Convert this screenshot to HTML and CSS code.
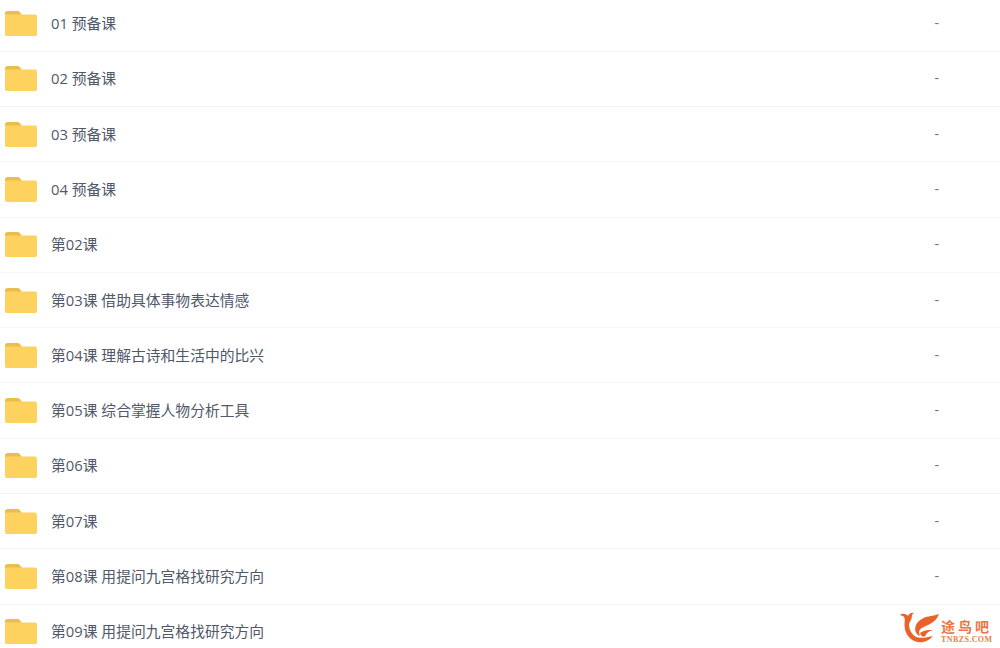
FILE: index.html
```html
<!DOCTYPE html>
<html lang="zh-CN">
<head>
<meta charset="UTF-8">
<title>文件列表</title>
<link rel="stylesheet" href="styles.css">
</head>
<body>
<svg class="defs" width="0" height="0">
  <symbol id="folder" viewBox="0 0 32 25">
    <path fill="#ecbd4e" d="M0 2.5C0 1 1 0 2.5 0h10c1 0 1.7.4 2.3 1.1L17 4H0z"/>
    <rect y="3.6" width="32" height="21.4" rx="1.8" fill="#fdd25f"/>
  </symbol>
</svg>
<ul class="file-list">
  <li class="row"><svg class="folder"><use href="#folder"/></svg><span class="name">01 预备课</span><span class="size">-</span></li>
  <li class="row"><svg class="folder"><use href="#folder"/></svg><span class="name">02 预备课</span><span class="size">-</span></li>
  <li class="row"><svg class="folder"><use href="#folder"/></svg><span class="name">03 预备课</span><span class="size">-</span></li>
  <li class="row"><svg class="folder"><use href="#folder"/></svg><span class="name">04 预备课</span><span class="size">-</span></li>
  <li class="row"><svg class="folder"><use href="#folder"/></svg><span class="name">第02课</span><span class="size">-</span></li>
  <li class="row"><svg class="folder"><use href="#folder"/></svg><span class="name">第03课 借助具体事物表达情感</span><span class="size">-</span></li>
  <li class="row"><svg class="folder"><use href="#folder"/></svg><span class="name">第04课 理解古诗和生活中的比兴</span><span class="size">-</span></li>
  <li class="row"><svg class="folder"><use href="#folder"/></svg><span class="name">第05课 综合掌握人物分析工具</span><span class="size">-</span></li>
  <li class="row"><svg class="folder"><use href="#folder"/></svg><span class="name">第06课</span><span class="size">-</span></li>
  <li class="row"><svg class="folder"><use href="#folder"/></svg><span class="name">第07课</span><span class="size">-</span></li>
  <li class="row"><svg class="folder"><use href="#folder"/></svg><span class="name">第08课 用提问九宫格找研究方向</span><span class="size">-</span></li>
  <li class="row"><svg class="folder"><use href="#folder"/></svg><span class="name">第09课 用提问九宫格找研究方向</span><span class="size">-</span></li>
</ul>
<div class="watermark">
  <svg class="wm-logo" viewBox="0 0 44 34">
    <path fill="#e8622a" d="M0 3C3 1 6 2 9 4 10 2 12 .5 15 1 14 2 13 3 13 5 13 9 10 11 10 14 10 20 14 27 20 28 25 29 30 28 36 26 33 31 26 34 20 33 12 32 5 24 5 15 5 10 6 7 4 5 3 4 1 4 0 3z"/>
    <path fill="#e8622a" d="M43 2C38 5 28 4 22 9 18 12 16 16 17 21 18 24 20 26 22 26 20 22 21 19 25 17 32 14 40 11 43 2z"/>
    <path fill="#e8622a" d="M22 23C26 20 31 19 36 20 32 21 29 23 28 26 26 28 23 27 22 23z"/>
  </svg>
  <div class="wm-text">
    <span class="wm-name">途鸟吧</span>
    <span class="wm-url">TNBZS.COM</span>
  </div>
</div>
</body>
</html>
```

FILE: styles.css
```css
body {
  margin: 0;
  height: 648px;
  overflow: hidden;
  background-color: white;
  font-family: "Open Sans", "Noto Sans CJK SC", sans-serif;
}
.defs {
  position: absolute;
}
.file-list {
  list-style: none;
  margin: -3.6px 0 0;
  padding: 0;
}
.row {
  display: flex;
  align-items: center;
  height: 55.3px;
  box-sizing: border-box;
  padding-left: 5px;
  border-bottom: 1px solid #f5f5f6;
}
.folder {
  width: 32px;
  height: 25px;
  flex-shrink: 0;
}
.name {
  margin-left: 14px;
  padding-bottom: 2px;
  font-size: 14.8px;
  color: #505869;
}
.size {
  margin-right: 61px;
  margin-left: auto;
  padding-bottom: 2px;
  font-size: 14px;
  color: #6b7280;
}
.watermark {
  position: absolute;
  left: 900px;
  top: 612px;
  display: flex;
  align-items: flex-end;
  gap: 1px;
  background-color: white;
  padding: 0 7px 4px 0;
}
.wm-logo {
  width: 40px;
  height: 31px;
  margin-bottom: 1px;
}
.wm-text {
  display: flex;
  flex-direction: column;
  align-items: flex-start;
}
.wm-name {
  font-family: "Liberation Sans", "Noto Sans CJK SC", sans-serif;
  font-size: 14px;
  font-weight: bold;
  line-height: 14px;
  letter-spacing: 3px;
  color: #ea7645;
}
.wm-url {
  margin-top: 2px;
  font-family: "Liberation Serif", serif;
  font-size: 8px;
  line-height: 8px;
  letter-spacing: 0.4px;
  font-weight: bold;
  color: #e8804f;
}
```
